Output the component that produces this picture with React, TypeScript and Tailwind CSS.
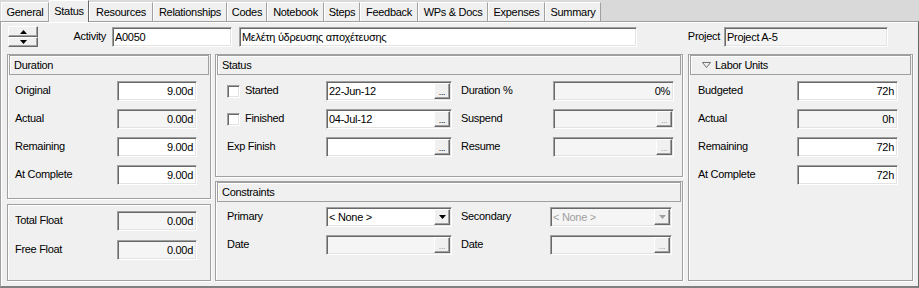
import React from "react";

const raised =
  "border border-t-white border-l-white border-b-[#696969] border-r-[#696969] shadow-[inset_-1px_-1px_0_#a0a0a0] bg-[#f0f0f0]";
const sunken =
  "border border-t-[#a0a0a0] border-l-[#a0a0a0] border-b-white border-r-white shadow-[inset_1px_1px_0_#696969,inset_-1px_-1px_0_#e3e3e3]";

const tabs: [string, string][] = [
  ["General", "w-[48px]"],
  ["Status", "w-[40px]"],
  ["Resources", "w-[64px]"],
  ["Relationships", "w-[74px]"],
  ["Codes", "w-[40px]"],
  ["Notebook", "w-[57px]"],
  ["Steps", "w-[36px]"],
  ["Feedback", "w-[58px]"],
  ["WPs & Docs", "w-[70px]"],
  ["Expenses", "w-[57px]"],
  ["Summary", "w-[56px]"],
];

const DotsBtn = ({ dis }: { dis?: boolean }) => (
  <div
    className={`${raised} w-[16px] shrink-0 flex items-end justify-center pb-[1px] text-[9px] leading-[9px] ${
      dis ? "text-[#a0a0a0]" : "text-black"
    }`}
  >
    ...
  </div>
);

const DropBtn = ({ dis }: { dis?: boolean }) => (
  <div className={`${raised} w-[16px] shrink-0 flex items-center justify-center`}>
    <svg width="7" height="4" viewBox="0 0 7 4">
      <polygon points="0,0 7,0 3.5,4" fill={dis ? "#a0a0a0" : "#000"} />
    </svg>
  </div>
);

const Field = ({
  w,
  value = "",
  right,
  ro,
  btn,
  drop,
  dis,
}: {
  w: string;
  value?: string;
  right?: boolean;
  ro?: boolean;
  btn?: boolean;
  drop?: boolean;
  dis?: boolean;
}) => (
  <div
    className={`${sunken} ${w} h-[20px] shrink-0 flex items-stretch p-[1px] ${
      ro ? "bg-[#f5f5f5]" : "bg-white"
    }`}
  >
    <div
      className={`flex-1 flex items-center overflow-hidden whitespace-nowrap ${
        right ? "justify-end pr-[2px]" : "pl-[1px]"
      } ${dis ? "text-[#a0a0a0]" : ""}`}
    >
      {value}
    </div>
    {btn && <DotsBtn dis={dis} />}
    {drop && <DropBtn dis={dis} />}
  </div>
);

const Group = ({
  h,
  title,
  children,
}: {
  h: string;
  title?: React.ReactNode;
  children: React.ReactNode;
}) => (
  <div
    className={`${h} border border-[#a0a0a0] shadow-[1px_1px_0_#fff,inset_1px_1px_0_#fff] flex flex-col`}
  >
    {title && (
      <div className="h-[20px] mx-[1px] border border-[#a0a0a0] shadow-[inset_1px_1px_0_#fff] flex items-center pl-[4px]">
        {title}
      </div>
    )}
    {children}
  </div>
);

const Check = () => <div className={`${sunken} w-[13px] h-[13px] bg-white shrink-0`} />;

const Row = ({ pl, lw, label, children }: { pl: string; lw: string; label: string; children: React.ReactNode }) => (
  <div className={`flex items-center h-[20px] ${pl}`}>
    <div className={`${lw} shrink-0 -mt-[2px]`}>{label}</div>
    {children}
  </div>
);

export default function App() {
  return (
    <div className="w-[919px] h-[288px] bg-[#d9d9d9] flex flex-col font-['Liberation_Sans',Arial,sans-serif] text-[11px] tracking-[-0.3px] text-black overflow-hidden">
      {/* tabs */}
      <div className="h-[21px] flex items-end pl-[1px] shrink-0">
        {tabs.map(([t, w]) =>
          t === "Status" ? (
            <div
              key={t}
              className={`${w} h-[22px] -mb-[1px] relative z-10 bg-[#f0f0f0] border-t border-l border-r border-t-white border-l-white border-r-[#696969] flex items-center justify-center`}
            >
              {t}
            </div>
          ) : (
            <div
              key={t}
              className={`${w} h-[19px] bg-[#f0f0f0] border-t border-l border-r border-t-white border-l-white border-r-[#a0a0a0] flex items-center justify-center`}
            >
              {t}
            </div>
          )
        )}
      </div>

      {/* panel */}
      <div className="flex-1 bg-[#f0f0f0] border-t border-l border-t-[#a0a0a0] border-l-[#a0a0a0] border-r border-r-[#696969] border-b-2 border-b-[#808080] shadow-[inset_1px_1px_0_#fff] pt-[4px] flex flex-col">
        {/* top row */}
        <div className="flex items-start h-[21px] pl-[7px]">
          <div className="w-[30px] h-[21px] flex flex-col shrink-0">
            <div className={`${raised} h-[11px] flex items-center justify-center`}>
              <svg width="7" height="4" viewBox="0 0 7 4">
                <polygon points="3.5,0 7,4 0,4" fill="#000" />
              </svg>
            </div>
            <div className={`${raised} h-[10px] flex items-center justify-center`}>
              <svg width="7" height="4" viewBox="0 0 7 4">
                <polygon points="0,0 7,0 3.5,4" fill="#000" />
              </svg>
            </div>
          </div>
          <div className="w-[69px] h-[21px] flex items-center justify-end pr-[1px] shrink-0">Activity</div>
          <div className="mt-[1px] ml-[5px]">
            <Field w="w-[120px]" value="A0050" />
          </div>
          <div className="mt-[1px] ml-[7px]">
            <Field w="w-[398px]" value="Μελέτη ύδρευσης αποχέτευσης" />
          </div>
          <div className="w-[83px] h-[21px] flex items-center justify-end shrink-0">Project</div>
          <div className="mt-[1px] ml-[4px]">
            <Field w="w-[164px]" value="Project A-5" ro />
          </div>
        </div>

        {/* groups */}
        <div className="flex mt-[7px] ml-[6px]">
          <div className="w-[204px] flex flex-col gap-[5px] shrink-0">
            <Group h="h-[145px]" title="Duration">
              <div className="flex flex-col gap-[8px] mt-[6px]">
                <Row pl="pl-[7px]" lw="w-[102px]" label="Original">
                  <Field w="w-[80px]" value="9.00d" right />
                </Row>
                <Row pl="pl-[7px]" lw="w-[102px]" label="Actual">
                  <Field w="w-[80px]" value="0.00d" right ro />
                </Row>
                <Row pl="pl-[7px]" lw="w-[102px]" label="Remaining">
                  <Field w="w-[80px]" value="9.00d" right />
                </Row>
                <Row pl="pl-[7px]" lw="w-[102px]" label="At Complete">
                  <Field w="w-[80px]" value="9.00d" right />
                </Row>
              </div>
            </Group>
            <Group h="h-[77px]">
              <div className="flex flex-col gap-[9px] mt-[6px]">
                <Row pl="pl-[7px]" lw="w-[102px]" label="Total Float">
                  <Field w="w-[80px]" value="0.00d" right ro />
                </Row>
                <Row pl="pl-[7px]" lw="w-[102px]" label="Free Float">
                  <Field w="w-[80px]" value="0.00d" right ro />
                </Row>
              </div>
            </Group>
          </div>

          <div className="w-[468px] ml-[4px] flex flex-col gap-[4px] shrink-0">
            <Group h="h-[123px]" title="Status">
              <div className="flex flex-col gap-[8px] mt-[6px]">
                <div className="flex items-center h-[20px] pl-[11px]">
                  <div className="w-[99px] flex items-center gap-[5px] shrink-0">
                    <Check />
                    <span className="-mt-[2px]">Started</span>
                  </div>
                  <Field w="w-[126px]" value="22-Jun-12" btn />
                  <div className="ml-[9px] w-[92px] shrink-0 -mt-[2px]">Duration %</div>
                  <Field w="w-[121px]" value="0%" right ro />
                </div>
                <div className="flex items-center h-[20px] pl-[11px]">
                  <div className="w-[99px] flex items-center gap-[5px] shrink-0">
                    <Check />
                    <span className="-mt-[2px]">Finished</span>
                  </div>
                  <Field w="w-[126px]" value="04-Jul-12" btn />
                  <div className="ml-[9px] w-[92px] shrink-0 -mt-[2px]">Suspend</div>
                  <Field w="w-[121px]" ro btn dis />
                </div>
                <div className="flex items-center h-[20px] pl-[11px]">
                  <div className="w-[99px] shrink-0 -mt-[2px]">Exp Finish</div>
                  <Field w="w-[126px]" btn />
                  <div className="ml-[9px] w-[92px] shrink-0 -mt-[2px]">Resume</div>
                  <Field w="w-[121px]" ro btn dis />
                </div>
              </div>
            </Group>
            <Group h="h-[100px]" title="Constraints">
              <div className="flex flex-col gap-[8px] mt-[5px]">
                <div className="flex items-center h-[20px] pl-[11px]">
                  <div className="w-[99px] shrink-0 -mt-[2px]">Primary</div>
                  <Field w="w-[126px]" value="< None >" drop />
                  <div className="ml-[9px] w-[89px] shrink-0 -mt-[2px]">Secondary</div>
                  <Field w="w-[122px]" value="< None >" ro drop dis />
                </div>
                <div className="flex items-center h-[20px] pl-[11px]">
                  <div className="w-[99px] shrink-0 -mt-[2px]">Date</div>
                  <Field w="w-[126px]" ro btn dis />
                  <div className="ml-[9px] w-[89px] shrink-0 -mt-[2px]">Date</div>
                  <Field w="w-[122px]" ro btn dis />
                </div>
              </div>
            </Group>
          </div>

          <div className="w-[225px] ml-[5px] shrink-0">
            <Group
              h="h-[227px]"
              title={
                <div className="flex items-center gap-[4px] pl-[7px]">
                  <svg width="9" height="6" viewBox="0 0 9 6">
                    <polyline points="0.5,0.5 8.5,0.5 4.5,5.5 0.5,0.5" fill="none" stroke="#505050" strokeWidth="0.8" />
                  </svg>
                  Labor Units
                </div>
              }
            >
              <div className="flex flex-col gap-[8px] mt-[6px]">
                <Row pl="pl-[9px]" lw="w-[99px]" label="Budgeted">
                  <Field w="w-[101px]" value="72h" right />
                </Row>
                <Row pl="pl-[9px]" lw="w-[99px]" label="Actual">
                  <Field w="w-[101px]" value="0h" right ro />
                </Row>
                <Row pl="pl-[9px]" lw="w-[99px]" label="Remaining">
                  <Field w="w-[101px]" value="72h" right />
                </Row>
                <Row pl="pl-[9px]" lw="w-[99px]" label="At Complete">
                  <Field w="w-[101px]" value="72h" right />
                </Row>
              </div>
            </Group>
          </div>
        </div>
      </div>
    </div>
  );
}
